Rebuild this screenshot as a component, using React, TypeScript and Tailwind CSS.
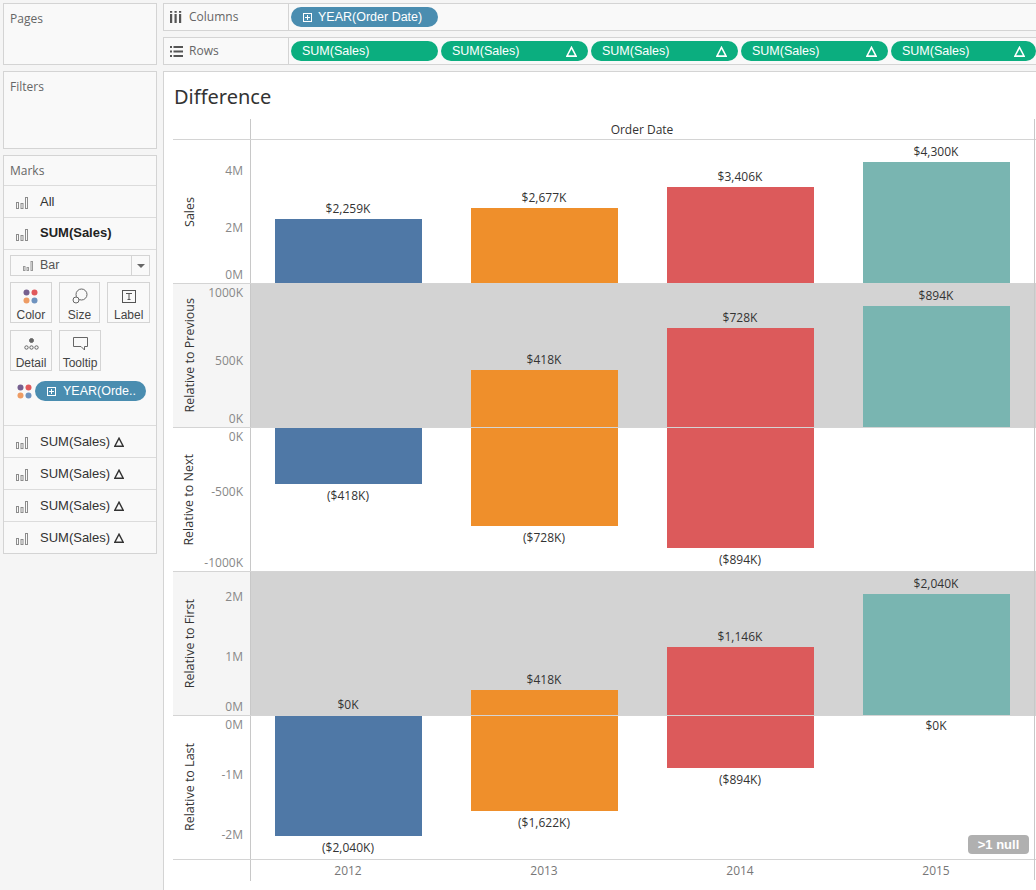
import React from "react";

const ui = "font-['Open_Sans','Noto_Sans',sans-serif]";
const ls = "font-['Liberation_Sans',Arial,sans-serif]";
const BLUE = "bg-[#4f78a6]";
const ORANGE = "bg-[#ef8f2b]";
const RED = "bg-[#dc5a5b]";
const TEAL = "bg-[#79b5b1]";

function BarsIcon({ className = "" }: { className?: string }) {
  return (
    <svg width="12" height="13" viewBox="0 0 12 13" className={className} fill="none" stroke="#8c8c8c">
      <rect x="0.5" y="6.5" width="2" height="6" />
      <rect x="5" y="7.5" width="2" height="5" />
      <rect x="9.5" y="1.5" width="2" height="11" />
    </svg>
  );
}

function Delta({ className = "", stroke = "#333", w = 10 }: { className?: string; stroke?: string; w?: number }) {
  return (
    <svg width={w} height={w} viewBox="0 0 10 10" className={className} fill="none" stroke={stroke} strokeWidth="1.4">
      <path d="M5 1.2 L9.2 9.2 H0.8 Z" />
    </svg>
  );
}

function Dots() {
  return (
    <svg width="15" height="15" viewBox="0 0 15 15">
      <circle cx="3.5" cy="3.5" r="3" fill="#76608f" />
      <circle cx="11.5" cy="3.5" r="3" fill="#e0595c" />
      <circle cx="3.5" cy="11.5" r="3" fill="#ee9c64" />
      <circle cx="11.5" cy="11.5" r="3" fill="#6f93bf" />
    </svg>
  );
}

function PlusBox({ stroke = "#fff" }: { stroke?: string }) {
  return (
    <svg width="9" height="9" viewBox="0 0 9 9" fill="none" stroke={stroke}>
      <rect x="0.5" y="0.5" width="8" height="8" />
      <path d="M4.5 2 V7 M2 4.5 H7" />
    </svg>
  );
}

function MarkRow({ label, bold, delta }: { label: string; bold?: boolean; delta?: boolean }) {
  return (
    <div className={`h-[32px] border-t border-[#dcdcdc] flex items-center pl-[12px] shrink-0 ${ls}`}>
      <BarsIcon className="mt-[2px]" />
      <span className={`ml-[12px] text-[13px] ${bold ? "font-bold text-[#222] -mt-px" : "text-[#333]"}`}>{label}</span>
      {delta && <Delta className="ml-[4px]" />}
    </div>
  );
}

function MarkButton({ label, icon, w = "w-[42px]" }: { label: string; icon: React.ReactNode; w?: string }) {
  return (
    <div className={`${w} h-[41px] border border-[#d4d4d4] flex flex-col items-center pt-[5px] bg-[#f9f9f9] ${ls}`}>
      <div className="h-[17px] flex items-center justify-center">{icon}</div>
      <span className="text-[12px] leading-[14px] mt-[4px] text-[#444]">{label}</span>
    </div>
  );
}

function Sidebar() {
  return (
    <div className="w-[163px] shrink-0 pl-[3px] pr-[6px] pt-[3px] flex flex-col gap-[6px]">
      <div className="h-[62px] border border-[#d4d4d4] bg-[#f9f9f9] px-[6px] pt-[6px] text-[12px] text-[#666]">Pages</div>
      <div className="h-[78px] border border-[#d4d4d4] bg-[#f9f9f9] px-[6px] pt-[6px] text-[12px] text-[#666]">Filters</div>
      <div className="h-[399px] border border-[#d4d4d4] bg-[#f9f9f9] flex flex-col">
        <div className="h-[29px] px-[6px] flex items-center text-[12px] text-[#666] shrink-0">Marks</div>
        <MarkRow label="All" />
        <MarkRow label="SUM(Sales)" bold />
        <div className="h-[176px] border-t border-[#dcdcdc] px-[6px] pt-[5px] shrink-0">
          <div className={`h-[21px] border border-[#d4d4d4] flex items-center ${ls}`}>
            <svg width="10" height="10" viewBox="0 0 10 10" className="ml-[12px]" fill="none" stroke="#999">
              <rect x="0.5" y="5.5" width="1.5" height="4" />
              <rect x="4" y="6.5" width="1.5" height="3" />
              <rect x="8" y="0.5" width="1.5" height="9" />
            </svg>
            <span className="ml-[7px] text-[12.5px] text-[#555] flex-1">Bar</span>
            <div className="w-[18px] h-full border-l border-[#d4d4d4] flex items-center justify-center">
              <div className="w-0 h-0 border-l-[4px] border-r-[4px] border-t-[4px] border-l-transparent border-r-transparent border-t-[#666]" />
            </div>
          </div>
          <div className="flex gap-[7px] mt-[6px]">
            <MarkButton label="Color" icon={<Dots />} />
            <MarkButton
              label="Size"
              icon={
                <svg width="16" height="16" viewBox="0 0 16 16" fill="none" stroke="#666">
                  <circle cx="9.5" cy="6.5" r="5.5" fill="#f9f9f9" />
                  <circle cx="4" cy="12" r="3" fill="#f9f9f9" />
                </svg>
              }
            />
            <MarkButton
              label="Label"
              w="w-[43px]"
              icon={
                <svg width="14" height="13" viewBox="0 0 14 13" fill="none" stroke="#555">
                  <rect x="0.5" y="0.5" width="13" height="12" />
                  <path d="M4 3.5 H10 M7 3.5 V9.5 M5.5 9.5 H8.5" />
                </svg>
              }
            />
          </div>
          <div className="flex gap-[7px] mt-[7px]">
            <MarkButton
              label="Detail"
              icon={
                <svg width="15" height="12" viewBox="0 0 15 12" fill="none" stroke="#666">
                  <circle cx="7.5" cy="2.5" r="2" fill="#666" />
                  <circle cx="2.5" cy="9.5" r="1.7" />
                  <circle cx="7.5" cy="9.5" r="1.7" />
                  <circle cx="12.5" cy="9.5" r="1.7" />
                </svg>
              }
            />
            <MarkButton
              label="Tooltip"
              icon={
                <svg width="15" height="14" viewBox="0 0 15 14" fill="none" stroke="#666">
                  <path d="M0.5 0.5 H14.5 V9.5 H11.5 V13 L8 9.5 H0.5 Z" />
                </svg>
              }
            />
          </div>
          <div className="flex items-center mt-[10px] ml-[7px]">
            <Dots />
            <div className={`ml-[3px] w-[111px] h-[20px] rounded-full bg-[#4a8db0] flex items-center pl-[12px] text-white text-[12.5px] ${ls}`}>
              <PlusBox />
              <span className="ml-[7px]">YEAR(Orde..</span>
            </div>
          </div>
        </div>
        <MarkRow label="SUM(Sales)" delta />
        <MarkRow label="SUM(Sales)" delta />
        <MarkRow label="SUM(Sales)" delta />
        <MarkRow label="SUM(Sales)" delta />
      </div>
    </div>
  );
}

function Shelf({ name, icon, children }: { name: string; icon: React.ReactNode; children: React.ReactNode }) {
  return (
    <div className="h-[28px] border-y border-l border-[#d4d4d4] bg-[#f9f9f9] flex items-center">
      <div className="w-[125px] h-full border-r border-[#d4d4d4] flex items-center pl-[6px] shrink-0 text-[12px] text-[#666]">
        <span className="w-[19px] flex">{icon}</span>
        {name}
      </div>
      <div className="flex gap-[3px] pl-[2px] flex-1 overflow-hidden">{children}</div>
    </div>
  );
}

function GreenPill({ delta, w = "w-[147px]" }: { delta?: boolean; w?: string }) {
  return (
    <div className={`${w} h-[20px] shrink-0 rounded-full bg-[#0bae7f] text-white text-[12.5px] flex items-center justify-between pl-[11px] pr-[11px] ${ls}`}>
      <span>SUM(Sales)</span>
      {delta && <Delta stroke="#fff" w={11} />}
    </div>
  );
}

type Tick = { t: string; cls: string };
type Bar = { h: string; color: string; label: string; labelCls: string };

function Cell({ bar, down }: { bar?: Bar; down?: boolean }) {
  if (!bar) return <div />;
  return (
    <div className={`flex flex-col items-center h-full ${down ? "justify-start" : "justify-end"}`}>
      {!down && <span className={`text-[12px] leading-[16px] text-[#333] ${bar.labelCls}`}>{bar.label}</span>}
      <div className={`w-[147px] shrink-0 ${bar.h} ${bar.color}`} />
      {down && <span className={`text-[12px] leading-[16px] text-[#333] ${bar.labelCls}`}>{bar.label}</span>}
    </div>
  );
}

function ChartRow({
  title,
  ticks,
  bars,
  band,
  down,
  h,
}: {
  title: string;
  ticks: Tick[];
  bars: (Bar | undefined)[];
  band?: boolean;
  down?: boolean;
  h: string;
}) {
  return (
    <div className={`flex border-b border-[#d4d4d4] ${h}`}>
      <div className={`w-[77px] shrink-0 flex ${band ? "bg-[#f5f5f5]" : ""}`}>
        <div className="w-[34px] flex items-center justify-center">
          <span className="[writing-mode:vertical-rl] rotate-180 text-[12.5px] leading-[16px] text-[#333] whitespace-nowrap">{title}</span>
        </div>
        <div className="flex-1 flex flex-col items-end pr-[7px] text-[12px] leading-[16px] text-[#888]">
          {ticks.map((k) => (
            <span key={k.t} className={k.cls}>{k.t}</span>
          ))}
        </div>
      </div>
      <div className={`flex-1 min-w-0 border-l border-[#c8c8c8] ${band ? "bg-[#d3d3d3]" : ""}`}>
        <div className="grid grid-cols-[196px_196px_196px_196px] h-full -ml-px">
          {bars.map((b, i) => (
            <Cell key={i} bar={b} down={down} />
          ))}
        </div>
      </div>
    </div>
  );
}

function Chart() {
  return (
    <div className="flex-1 min-h-0 bg-white border-t border-l border-[#d4d4d4] pl-[9px] flex flex-col relative">
      <div className="text-[20px] leading-[28px] text-[#333] font-['Noto_Sans',sans-serif] mt-[11px] ml-[1px] h-[36px]">Difference</div>
      <div className="flex border-b border-[#d4d4d4] h-[21px]">
        <div className="w-[77px] shrink-0" />
        <div className="flex-1 border-l border-[#c8c8c8] text-center text-[12px] leading-[22px] text-[#333] pr-[3px]">Order Date</div>
      </div>
      <ChartRow
        title="Sales"
        h="h-[144px]"
        ticks={[
          { t: "4M", cls: "mt-[23px]" },
          { t: "2M", cls: "mt-[41px]" },
          { t: "0M", cls: "mt-[31px]" },
        ]}
        bars={[
          { h: "h-[64px]", color: BLUE, label: "$2,259K", labelCls: "mb-[2px]" },
          { h: "h-[75px]", color: ORANGE, label: "$2,677K", labelCls: "mb-[2px]" },
          { h: "h-[96px]", color: RED, label: "$3,406K", labelCls: "mb-[2px]" },
          { h: "h-[121px]", color: TEAL, label: "$4,300K", labelCls: "mb-[2px]" },
        ]}
      />
      <ChartRow
        title="Relative to Previous"
        band
        h="h-[144px]"
        ticks={[
          { t: "1000K", cls: "mt-[1px]" },
          { t: "500K", cls: "mt-[52px]" },
          { t: "0K", cls: "mt-[42px]" },
        ]}
        bars={[
          undefined,
          { h: "h-[57px]", color: ORANGE, label: "$418K", labelCls: "mb-[2px]" },
          { h: "h-[99px]", color: RED, label: "$728K", labelCls: "mb-[2px]" },
          { h: "h-[121px]", color: TEAL, label: "$894K", labelCls: "mb-[2px]" },
        ]}
      />
      <ChartRow
        title="Relative to Next"
        down
        h="h-[144px]"
        ticks={[
          { t: "0K", cls: "mt-[1px]" },
          { t: "-500K", cls: "mt-[39px]" },
          { t: "-1000K", cls: "mt-[55px]" },
        ]}
        bars={[
          { h: "h-[56px]", color: BLUE, label: "($418K)", labelCls: "mt-[4px]" },
          { h: "h-[98px]", color: ORANGE, label: "($728K)", labelCls: "mt-[4px]" },
          { h: "h-[120px]", color: RED, label: "($894K)", labelCls: "mt-[4px]" },
          undefined,
        ]}
      />
      <ChartRow
        title="Relative to First"
        band
        h="h-[144px]"
        ticks={[
          { t: "2M", cls: "mt-[17px]" },
          { t: "1M", cls: "mt-[44px]" },
          { t: "0M", cls: "mt-[34px]" },
        ]}
        bars={[
          { h: "h-0", color: BLUE, label: "$0K", labelCls: "mb-[2px]" },
          { h: "h-[25px]", color: ORANGE, label: "$418K", labelCls: "mb-[2px]" },
          { h: "h-[68px]", color: RED, label: "$1,146K", labelCls: "mb-[2px]" },
          { h: "h-[121px]", color: TEAL, label: "$2,040K", labelCls: "mb-[2px]" },
        ]}
      />
      <ChartRow
        title="Relative to Last"
        down
        h="h-[144px]"
        ticks={[
          { t: "0M", cls: "mt-[1px]" },
          { t: "-1M", cls: "mt-[34px]" },
          { t: "-2M", cls: "mt-[44px]" },
        ]}
        bars={[
          { h: "h-[120px]", color: BLUE, label: "($2,040K)", labelCls: "mt-[4px]" },
          { h: "h-[95px]", color: ORANGE, label: "($1,622K)", labelCls: "mt-[4px]" },
          { h: "h-[52px]", color: RED, label: "($894K)", labelCls: "mt-[4px]" },
          { h: "h-0", color: TEAL, label: "$0K", labelCls: "mt-[2px]" },
        ]}
      />
      <div className="flex h-[21px]">
        <div className="w-[77px] shrink-0" />
        <div className="flex-1 border-l border-[#c8c8c8] text-[12px] leading-[22px] text-[#777]">
          <div className="grid grid-cols-[196px_196px_196px_196px] text-center -ml-px">
            <span>2012</span>
            <span>2013</span>
            <span>2014</span>
            <span>2015</span>
          </div>
        </div>
      </div>
      <div className={`absolute left-[804px] top-[763px] w-[61px] h-[19px] rounded-[4px] bg-[#b0b0b0] text-white text-[13px] font-bold flex items-center justify-center ${ls}`}>
        &gt;1 null
      </div>
      <div className="absolute left-[870px] top-[47px] h-[761px] w-px bg-[#c8c8c8]" />
    </div>
  );
}

export default function App() {
  return (
    <div className={`w-[1036px] h-[890px] bg-[#f5f5f5] flex overflow-hidden ${ui}`}>
      <Sidebar />
      <div className="flex-1 min-w-0 flex flex-col gap-[6px] pt-[3px]">
        <Shelf
          name="Columns"
          icon={
            <svg width="12" height="12" viewBox="0 0 12 12" fill="#555">
              <rect x="0" y="3" width="2.2" height="9" />
              <rect x="4.5" y="3" width="2.2" height="9" />
              <rect x="9" y="3" width="2.2" height="9" />
              <rect x="0" y="0" width="2.2" height="1.8" />
              <rect x="4.5" y="0" width="2.2" height="1.8" />
              <rect x="9" y="0" width="2.2" height="1.8" />
            </svg>
          }
        >
          <div className={`w-[147px] h-[20px] rounded-full bg-[#4a8db0] text-white text-[12.5px] flex items-center pl-[12px] ${ls}`}>
            <PlusBox />
            <span className="ml-[6px]">YEAR(Order Date)</span>
          </div>
        </Shelf>
        <Shelf
          name="Rows"
          icon={
            <svg width="13" height="11" viewBox="0 0 13 11" fill="#555">
              <rect x="0" y="0" width="2" height="2" />
              <rect x="0" y="4.5" width="2" height="2" />
              <rect x="0" y="9" width="2" height="2" />
              <rect x="3.5" y="0" width="9.5" height="2" />
              <rect x="3.5" y="4.5" width="9.5" height="2" />
              <rect x="3.5" y="9" width="9.5" height="2" />
            </svg>
          }
        >
          <GreenPill />
          <GreenPill delta />
          <GreenPill delta />
          <GreenPill delta />
          <GreenPill delta w="w-[145px]" />
        </Shelf>
        <Chart />
      </div>
    </div>
  );
}
